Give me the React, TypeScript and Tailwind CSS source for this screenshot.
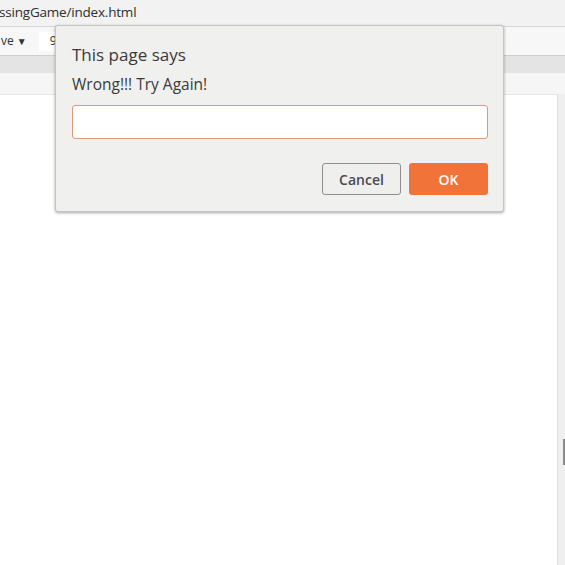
export default function App() {
  return (
    <div className="relative flex h-[565px] w-[565px] flex-col overflow-hidden bg-[#f2f2f2] font-['Open_Sans',sans-serif]">
      {/* address bar */}
      <div className="flex h-[27px] items-center border-b border-[#d4d4d4] bg-[#f2f2f2] text-[13.5px] leading-none text-[#2e2e2e]">
        <span className="-ml-[1px] tracking-[-0.2px]">ssingGame/index.html</span>
      </div>
      {/* toolbar */}
      <div className="flex h-[29px] items-center border-b border-[#cfcfcf] bg-[#f7f7f7] text-[12px] text-[#333]">
        <span className="ml-[1px]">
          ve <span className="text-[10px]">▼</span>
        </span>
        <span className="ml-[12px] flex h-[19px] w-[18px] items-center bg-white pl-[11px]">9</span>
      </div>
      <div className="h-[17px] bg-[#e4e4e4]" />
      <div className="h-[21px] bg-[#f6f6f6]" />
      {/* page */}
      <div className="flex flex-1">
        <div className="flex-1 border-t border-[#e6e6e6] bg-white" />
        <div className="relative w-[8px] border-l border-[#dedede] bg-[#efefef]">
          <div className="absolute right-0 top-[345px] h-[26px] w-[2px] bg-[#8a8a8a]" />
        </div>
      </div>

      {/* prompt dialog */}
      <div className="absolute left-[55px] top-[25px] flex h-[187px] w-[449px] flex-col rounded-[3px] border border-[#c4c4c4] bg-[#f0f0ee] pl-[16px] pr-[15px] shadow-[0_1px_3px_rgba(0,0,0,0.35)]">
        <div className="mt-[17px] text-[17px] leading-[24px] text-[#3a3a3a]">This page says</div>
        <div className="mt-[7px] text-[15.5px] leading-[21px] text-[#3a3a3a]">Wrong!!! Try Again!</div>
        <input
          className="mt-[10px] h-[34px] w-full rounded-[3px] border border-[#e0977a] bg-white px-2 outline-none"
          defaultValue=""
        />
        <div className="mt-[24px] flex justify-end gap-[8px]">
          <button className="h-[32px] w-[79px] rounded-[3px] border border-[#8e8e8e] bg-[#efefed] text-[14px] font-semibold text-[#4a4a55]">
            Cancel
          </button>
          <button className="h-[32px] w-[79px] rounded-[3px] bg-[#f2733a] text-[14px] font-semibold text-white">
            OK
          </button>
        </div>
      </div>
    </div>
  );
}
